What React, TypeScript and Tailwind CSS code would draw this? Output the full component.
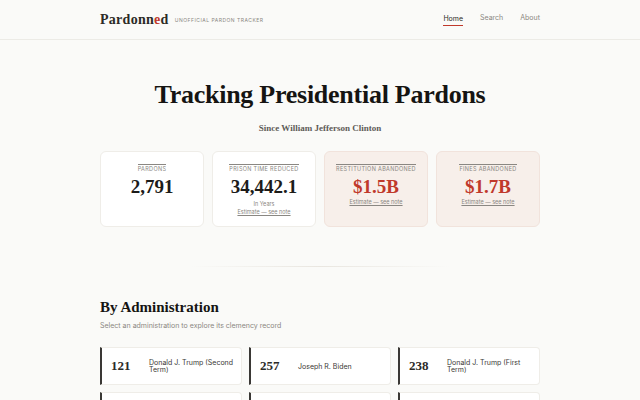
import React from 'react'

const serif = { fontFamily: '"Liberation Serif", "DejaVu Serif", serif' }

interface Stat {
  label: string
  value: string
  sub?: string
  note?: boolean
  accent?: boolean
}

const stats: Stat[] = [
  { label: 'Pardons', value: '2,791' },
  { label: 'Prison Time Reduced', value: '34,442.1', sub: 'In Years', note: true },
  { label: 'Restitution Abandoned', value: '$1.5B', note: true, accent: true },
  { label: 'Fines Abandoned', value: '$1.7B', note: true, accent: true },
]

const admins = [
  { count: '121', name: 'Donald J. Trump (Second Term)' },
  { count: '257', name: 'Joseph R. Biden' },
  { count: '238', name: 'Donald J. Trump (First Term)' },
  { count: '1,715', name: 'Barack Obama' },
  { count: '189', name: 'George W. Bush' },
  { count: '459', name: 'William J. Clinton' },
]

function StatCard({ stat }: { stat: Stat }) {
  return (
    <div
      className={
        stat.accent
          ? 'h-[76px] rounded-md border border-[#f1e3dc] bg-[#f7efea] flex flex-col items-center pt-[12px]'
          : 'h-[76px] rounded-md border border-[#efede8] bg-white flex flex-col items-center pt-[12px]'
      }
    >
      <div className="border-t border-[#8a8782] pt-[1px] text-[5.5px] leading-[7px] uppercase tracking-[0.06em] text-[#8a8782]">
        {stat.label}
      </div>
      <div
        style={serif}
        className={
          stat.accent
            ? 'mt-[3px] text-[19px] leading-[22px] font-bold text-[#c0392b]'
            : 'mt-[3px] text-[19px] leading-[22px] font-bold text-[#1c1b19]'
        }
      >
        {stat.value}
      </div>
      {stat.sub && <div className="mt-[3px] text-[5.5px] leading-[7px] text-[#8a8782]">{stat.sub}</div>}
      {stat.note && (
        <div className="mt-[1px] text-[5.5px] leading-[7px] text-[#8a8782] underline">Estimate — see note</div>
      )}
    </div>
  )
}

export default function App() {
  return (
    <div
      className="min-h-[400px] w-[640px] bg-[#fafaf8] text-[#1c1b19] overflow-hidden"
      style={{ fontFamily: 'Inter, "Liberation Sans", sans-serif' }}
    >
      {/* Header */}
      <header className="h-[40px] border-b border-[#ecebe6] flex items-center justify-between px-[100px]">
        <div className="flex items-center gap-[6px]">
          <span style={serif} className="text-[14px] font-bold tracking-[0.02em] text-[#2c2a27]">
            Pardonn<span className="text-[#c0392b]">e</span>d
          </span>
          <span className="text-[5px] tracking-[0.1em] uppercase text-[#8a8782] mt-[3px]">
            Unofficial Pardon Tracker
          </span>
        </div>
        <nav className="flex items-center gap-[17px] text-[7px]">
          <span className="text-[#2c2a27] border-b border-[#c0392b] pb-[1px] mt-[1px]">Home</span>
          <span className="text-[#8a8782] pb-[2px]">Search</span>
          <span className="text-[#8a8782] pb-[2px]">About</span>
        </nav>
      </header>

      <main className="px-[100px]">
        {/* Hero */}
        <section className="pt-[38px] flex flex-col items-center">
          <h1 style={serif} className="text-[26px] leading-[34px] font-bold tracking-[-0.01em] text-[#151412]">
            Tracking Presidential Pardons
          </h1>
          <p style={serif} className="mt-[10px] text-[9px] leading-[12px] font-bold text-[#5e5b57]">
            Since William Jefferson Clinton
          </p>
        </section>

        <section className="mt-[17px] grid grid-cols-4 gap-[8px]">
          {stats.map((s) => (
            <StatCard key={s.label} stat={s} />
          ))}
        </section>

        <div className="mt-[39px] mx-[90px] h-px bg-gradient-to-r from-transparent via-[#e9e6e0] to-transparent" />

        {/* Administrations */}
        <section className="mt-[31px]">
          <h2 style={serif} className="text-[15px] leading-[18px] font-bold text-[#151412]">
            By Administration
          </h2>
          <p className="mt-[5px] text-[7px] leading-[9px] text-[#8a8782]">
            Select an administration to explore its clemency record
          </p>
          <div className="mt-[17px] grid grid-cols-3 gap-x-[7px] gap-y-[7px]">
            {admins.map((a) => (
              <div
                key={a.name}
                className="h-[38px] bg-white rounded-r-[4px] border border-[#efede8] border-l-[2px] border-l-[#3a3835] flex items-center pl-[9px] pr-[4px]"
              >
                <span style={serif} className="w-[38px] shrink-0 text-[13px] font-bold text-[#2c2a27]">
                  {a.count}
                </span>
                <span className="text-[7px] leading-[7px] text-[#3a3835]">{a.name}</span>
              </div>
            ))}
          </div>
        </section>
      </main>
    </div>
  )
}
